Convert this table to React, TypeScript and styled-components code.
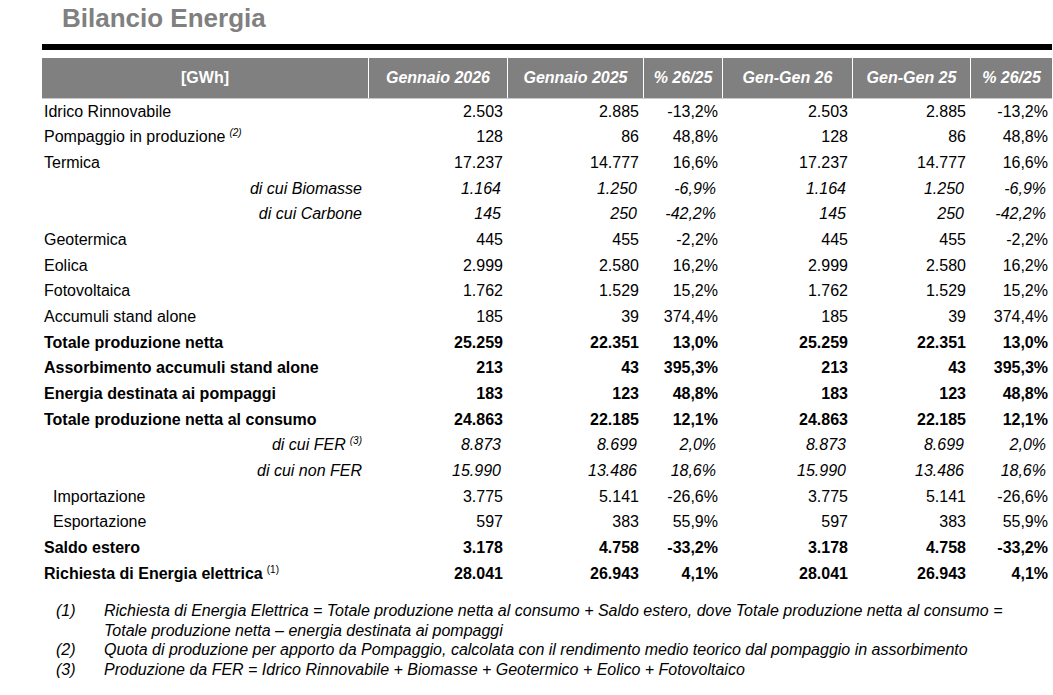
import React from "react";
import styled, { createGlobalStyle, css } from "styled-components";

const Global = createGlobalStyle`
  html, body { margin: 0; padding: 0; background: #ffffff; }
  body { font-family: "Liberation Sans", Arial, sans-serif; color: #000; }
`;

const COLS = "326px 139px 136px 79px 130px 118px 82px";

const Page = styled.div`
  width: 1053px;
  height: 695px;
  padding: 0 0 0 42px;
  box-sizing: border-box;
  overflow: hidden;
`;

const Title = styled.h1`
  margin: 0;
  padding: 3px 0 0 20px;
  height: 44px;
  box-sizing: border-box;
  font-family: "Liberation Sans", Arial, sans-serif;
  font-weight: bold;
  font-size: 26px;
  line-height: 30px;
  color: #808080;
`;

const Rule = styled.div`
  height: 6px;
  width: 1010px;
  background: #000;
  margin-bottom: 8px;
`;

const HeaderRow = styled.div`
  display: grid;
  grid-template-columns: ${COLS};
  height: 40px;
  background: #808080;
  border-bottom: 1px solid #c8c8c8;
  width: 1010px;
`;

const HeaderCell = styled.div<{ $first?: boolean }>`
  display: flex;
  align-items: center;
  justify-content: center;
  color: #fff;
  font-weight: bold;
  font-style: ${(p) => (p.$first ? "normal" : "italic")};
  font-size: 16px;
  border-left: ${(p) => (p.$first ? "none" : "1px solid #ffffff")};
  white-space: nowrap;
`;

type Kind = "normal" | "bold" | "sub" | "indent";

const Row = styled.div<{ $kind: Kind }>`
  display: grid;
  grid-template-columns: ${COLS};
  height: 25.66px;
  align-items: center;
  width: 1010px;
  font-size: 16px;
  font-weight: ${(p) => (p.$kind === "bold" ? "bold" : "normal")};
  font-style: ${(p) => (p.$kind === "sub" ? "italic" : "normal")};
`;

const Label = styled.div<{ $kind: Kind }>`
  white-space: nowrap;
  padding-left: ${(p) => (p.$kind === "indent" ? "11px" : "2px")};
  ${(p) =>
    p.$kind === "sub" &&
    css`
      text-align: right;
      padding-right: 6px;
      padding-left: 0;
    `}
`;

const Num = styled.div<{ $kind: Kind }>`
  text-align: right;
  white-space: nowrap;
  padding-right: ${(p) => (p.$kind === "sub" ? "6px" : "4px")};
`;

const Sup = styled.sup<{ $italic?: boolean }>`
  font-size: 10px;
  font-weight: normal;
  font-style: ${(p) => (p.$italic ? "italic" : "normal")};
  vertical-align: 6px;
  line-height: 0;
  margin-left: 4px;
`;

const Notes = styled.div`
  margin-top: 15px;
  padding-left: 14px;
  display: flex;
  flex-direction: column;
  font-family: "Liberation Sans Narrow", "Liberation Sans", Arial, sans-serif;
  font-stretch: condensed;
  font-style: italic;
  font-size: 16px;
  line-height: 19.5px;
`;

const Note = styled.div`
  display: grid;
  grid-template-columns: 48px 920px;
`;

type RowData = { label: string; kind: Kind; sup?: string; supItalic?: boolean; v: string[] };

const rows: RowData[] = [
  { label: "Idrico Rinnovabile", kind: "normal", v: ["2.503", "2.885", "-13,2%"] },
  { label: "Pompaggio in produzione", kind: "normal", sup: "(2)", supItalic: true, v: ["128", "86", "48,8%"] },
  { label: "Termica", kind: "normal", v: ["17.237", "14.777", "16,6%"] },
  { label: "di cui Biomasse", kind: "sub", v: ["1.164", "1.250", "-6,9%"] },
  { label: "di cui Carbone", kind: "sub", v: ["145", "250", "-42,2%"] },
  { label: "Geotermica", kind: "normal", v: ["445", "455", "-2,2%"] },
  { label: "Eolica", kind: "normal", v: ["2.999", "2.580", "16,2%"] },
  { label: "Fotovoltaica", kind: "normal", v: ["1.762", "1.529", "15,2%"] },
  { label: "Accumuli stand alone", kind: "normal", v: ["185", "39", "374,4%"] },
  { label: "Totale produzione netta", kind: "bold", v: ["25.259", "22.351", "13,0%"] },
  { label: "Assorbimento accumuli stand alone", kind: "bold", v: ["213", "43", "395,3%"] },
  { label: "Energia destinata ai pompaggi", kind: "bold", v: ["183", "123", "48,8%"] },
  { label: "Totale produzione netta al consumo", kind: "bold", v: ["24.863", "22.185", "12,1%"] },
  { label: "di cui FER", kind: "sub", sup: "(3)", supItalic: true, v: ["8.873", "8.699", "2,0%"] },
  { label: "di cui non FER", kind: "sub", v: ["15.990", "13.486", "18,6%"] },
  { label: "Importazione", kind: "indent", v: ["3.775", "5.141", "-26,6%"] },
  { label: "Esportazione", kind: "indent", v: ["597", "383", "55,9%"] },
  { label: "Saldo estero", kind: "bold", v: ["3.178", "4.758", "-33,2%"] },
  { label: "Richiesta di Energia elettrica", kind: "bold", sup: "(1)", v: ["28.041", "26.943", "4,1%"] },
];

const headers = ["[GWh]", "Gennaio 2026", "Gennaio 2025", "% 26/25", "Gen-Gen 26", "Gen-Gen 25", "% 26/25"];

const notes: [string, string[]][] = [
  [
    "(1)",
    [
      "Richiesta di Energia Elettrica = Totale produzione netta al consumo + Saldo estero, dove Totale produzione netta al consumo =",
      "Totale produzione netta – energia destinata ai pompaggi",
    ],
  ],
  ["(2)", ["Quota di produzione per apporto da Pompaggio, calcolata con il rendimento medio teorico dal pompaggio in assorbimento"]],
  ["(3)", ["Produzione da FER = Idrico Rinnovabile + Biomasse + Geotermico + Eolico + Fotovoltaico"]],
];

export default function App() {
  return (
    <Page>
      <Global />
      <Title>Bilancio Energia</Title>
      <Rule />
      <HeaderRow>
        {headers.map((h, i) => (
          <HeaderCell key={i} $first={i === 0}>
            {h}
          </HeaderCell>
        ))}
      </HeaderRow>
      {rows.map((r, i) => (
        <Row key={i} $kind={r.kind}>
          <Label $kind={r.kind}>
            {r.label}
            {r.sup && <Sup $italic={r.supItalic}>{r.sup}</Sup>}
          </Label>
          {[...r.v, ...r.v].map((v, j) => (
            <Num key={j} $kind={r.kind}>
              {v}
            </Num>
          ))}
        </Row>
      ))}
      <Notes>
        {notes.map(([n, lines]) => (
          <Note key={n}>
            <span>{n}</span>
            <div>
              {lines.map((l, k) => (
                <div key={k}>{l}</div>
              ))}
            </div>
          </Note>
        ))}
      </Notes>
    </Page>
  );
}
